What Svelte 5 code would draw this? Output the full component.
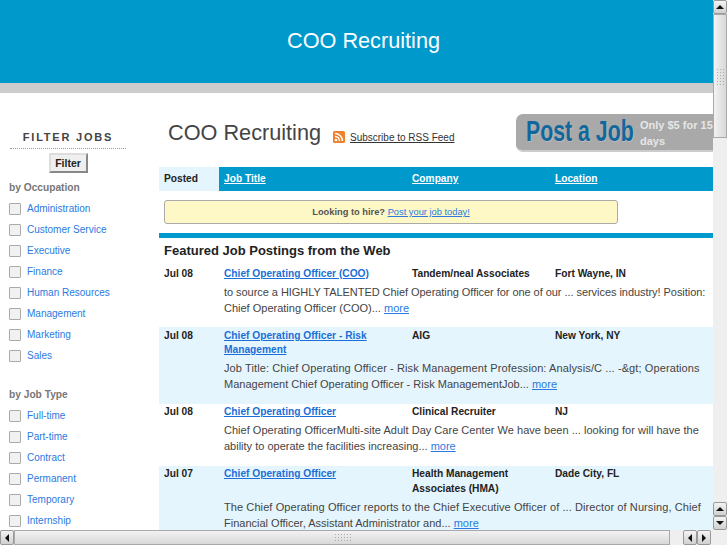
<script>
  const occupations = ['Administration', 'Customer Service', 'Executive', 'Finance', 'Human Resources', 'Management', 'Marketing', 'Sales'];
  const jobTypes = ['Full-time', 'Part-time', 'Contract', 'Permanent', 'Temporary', 'Internship'];
  // track: letter spacing of the description's first line
  const jobs = [
    { date: 'Jul 08', title: 'Chief Operating Officer (COO)', company: 'Tandem/neal Associates', location: 'Fort Wayne, IN', track: -0.05, lead: 'to source a HIGHLY TALENTED Chief Operating Officer for one of our ... services industry! Position:', rest: 'Chief Operating Officer (COO)...' },
    { date: 'Jul 08', title: 'Chief Operating Officer - Risk Management', company: 'AIG', location: 'New York, NY', track: 0.104, lead: 'Job Title: Chief Operating Officer - Risk Management Profession: Analysis/C ... -&gt; Operations', rest: 'Management Chief Operating Officer - Risk ManagementJob...', alt: true },
    { date: 'Jul 08', title: 'Chief Operating Officer', company: 'Clinical Recruiter', location: 'NJ', track: 0.02, lead: 'Chief Operating OfficerMulti-site Adult Day Care Center We have been ... looking for will have the', rest: 'ability to operate the facilities increasing...' },
    { date: 'Jul 07', title: 'Chief Operating Officer', company: 'Health Management Associates (HMA)', location: 'Dade City, FL', track: 0.089, lead: 'The Chief Operating Officer reports to the Chief Executive Officer of ... Director of Nursing, Chief', rest: 'Financial Officer, Assistant Administrator and...', alt: true }
  ];
</script>

<div class="page">
  <header class="top">COO Recruiting</header>
  <div class="stripe"></div>

  <div class="body">
    <aside class="side">
      <h3>FILTER JOBS</h3>
      <div class="btn-wrap"><button>Filter</button></div>
      <h4>by Occupation</h4>
      {#each occupations as o}
        <div class="check"><span class="box"></span><a href="#x">{o}</a></div>
      {/each}
      <h4 class="second">by Job Type</h4>
      {#each jobTypes as o}
        <div class="check"><span class="box"></span><a href="#x">{o}</a></div>
      {/each}
    </aside>

    <main class="main">
      <div class="head">
        <h1>COO Recruiting</h1>
        <svg class="rss" width="12" height="12" viewBox="0 0 12 12">
          <rect width="12" height="12" rx="1.5" fill="#f0812a"/>
          <circle cx="3" cy="9" r="1.3" fill="#fff"/>
          <path d="M2 5.5a4.5 4.5 0 0 1 4.5 4.5M2 2.5a7.5 7.5 0 0 1 7.5 7.5" fill="none" stroke="#fff" stroke-width="1.5"/>
        </svg>
        <a class="sub" href="#x">Subscribe to RSS Feed</a>
        <div class="banner">
          <span class="post"><span>Post a Job</span></span>
          <span class="only">Only $5 for 15 days</span>
        </div>
      </div>

      <div class="row thead">
        <div class="posted">Posted</div>
        <a href="#x">Job Title</a>
        <a href="#x">Company</a>
        <a href="#x">Location</a>
      </div>

      <div class="hire"><b>Looking to hire?</b> <a href="#x">Post your job today!</a></div>

      <h2>Featured Job Postings from the Web</h2>

      {#each jobs as j}
        <div class="job" class:alt={j.alt}>
          <div class="row info">
            <b>{j.date}</b>
            <a href="#x">{j.title}</a>
            <b>{j.company}</b>
            <b>{j.location}</b>
          </div>
          <p><span class="lead" style="letter-spacing: {j.track}px">{j.lead}</span> {j.rest} <a href="#x">more</a></p>
        </div>
      {/each}
    </main>
  </div>

  <div class="vbar">
    <div class="vbtn"><i class="up"></i></div>
    <div class="vthumb"><span class="grip"></span></div>
    <div class="vtrack"></div>
    <div class="vbtn"><i class="up"></i></div>
    <div class="vbtn"><i class="down"></i></div>
  </div>
  <div class="hbar">
    <div class="hbtn"><i class="left"></i></div>
    <div class="hthumb"><span class="grip"></span></div>
    <div class="htrack"></div>
    <div class="hbtn"><i class="left"></i></div>
    <div class="hbtn"><i class="right"></i></div>
    <div class="corner"></div>
  </div>
</div>

<style>
  :global(body) {
    margin: 0;
    background: #fff;
  }
  .page {
    position: relative;
    width: 727px;
    height: 545px;
    overflow: hidden;
    font-family: "Liberation Sans", Arial, sans-serif;
    font-size: 10.2px;
    color: #333;
  }
  .top {
    height: 83px;
    background: #0099cc;
    color: #fff;
    font-size: 21.7px;
    line-height: 82px;
    text-align: center;
  }
  .stripe {
    height: 10px;
    background: #cccccc;
  }
  .body {
    display: flex;
    padding-left: 10px;
  }
  .side {
    width: 116px;
    margin-right: 33px;
    padding-top: 37px;
    flex: none;
  }
  .side h3 {
    margin: 0;
    font-size: 11px;
    line-height: 14px;
    letter-spacing: 1.8px;
    text-align: center;
    color: #444;
    padding-bottom: 4px;
    border-bottom: 1px dotted #999;
  }
  .btn-wrap {
    text-align: center;
    margin-top: 4px;
    height: 20px;
  }
  button {
    font: bold 10.5px "Liberation Sans", Arial, sans-serif;
    color: #222;
    width: 39px;
    height: 20px;
    padding: 0;
    background: #efefef;
    border: 2px solid;
    border-color: #ddd #888 #888 #ddd;
  }
  .side h4 {
    margin: 8px 0 2.5px -1px;
    font-size: 10.2px;
    line-height: 14px;
    color: #777;
  }
  .side h4.second {
    margin-top: 22.5px;
  }
  .check {
    display: flex;
    align-items: center;
    height: 21px;
  }
  .box {
    box-sizing: border-box;
    width: 12px;
    height: 12px;
    flex: none;
    border: 1px solid #aaa;
    border-radius: 1px;
    background: #f1f1f1;
    margin: 0 6px 0 -1px;
    position: relative;
    top: 1px;
  }
  .check a {
    font-size: 10px;
    color: #2a7ae2;
    text-decoration: none;
  }
  .main {
    width: 554px;
    flex: none;
  }
  .head {
    display: flex;
    align-items: center;
    height: 74px;
    padding-left: 9px;
  }
  h1 {
    margin: 6px 12px 0 0;
    font-size: 21.7px;
    font-weight: normal;
    color: #444;
    width: 153px;
    white-space: nowrap;
  }
  .rss {
    margin-right: 5px;
    margin-top: 14px;
  }
  .sub {
    color: #333;
    font-size: 10px;
    margin-top: 14px;
  }
  .banner {
    position: relative;
    margin-left: auto;
    margin-top: 6px;
    width: 197px;
    height: 36px;
    background: #a9a9a9;
    border-radius: 7px 0 0 7px;
    border-bottom: 2px solid #ccc;
    display: flex;
    align-items: center;
  }
  .post {
    width: 116px;
    margin-left: 10px;
    margin-top: -3px;
    flex: none;
    color: #11679c;
    font-weight: bold;
    font-size: 30px;
    white-space: nowrap;
  }
  .post span {
    display: inline-block;
    transform: scaleX(0.71);
    transform-origin: left center;
    text-shadow: 1px 1px 0 #bbb;
  }
  .only {
    width: 80px;
    margin-left: -2px;
    margin-top: 2px;
    color: #e6e6e6;
    font-weight: bold;
    font-size: 11px;
    line-height: 16px;
  }
  .row {
    display: grid;
    grid-template-columns: 60px 193px 143px 1fr;
  }
  .thead {
    height: 24px;
    background: #0099cc;
    line-height: 23px;
    font-weight: bold;
  }
  .thead .posted {
    background: #e5f5fd;
    color: #222;
    padding-left: 5px;
  }
  .thead a {
    color: #fff;
    padding-left: 5px;
  }
  .thead a + a {
    padding-left: 0;
  }
  .hire {
    box-sizing: border-box;
    margin: 9px 0 0 5px;
    width: 454px;
    height: 24px;
    line-height: 22px;
    text-align: center;
    font-size: 9.3px;
    background: #fdf8c6;
    border: 1px solid #aaa;
    border-radius: 3px;
  }
  .hire b {
    color: #555;
  }
  .hire a {
    color: #2a7ae2;
  }
  h2 {
    box-sizing: border-box;
    margin: 9px 0 0;
    padding: 3px 5px 0;
    height: 32px;
    border-top: 5px solid #0099cc;
    font-size: 13px;
    line-height: 19px;
    color: #222;
  }
  .job {
    padding: 1.5px 5px 0;
  }
  .job.alt {
    background: #e5f5fd;
  }
  .info {
    grid-template-columns: 60px 188px 143px 1fr;
    line-height: 14.5px;
  }
  .info b {
    color: #222;
  }
  .info a {
    color: #1a6fd8;
    font-weight: bold;
    padding-right: 24px;
  }
  .job p {
    margin: 2.5px 0 0 60px;
    font-size: 11px;
    line-height: 16px;
    color: #444;
    padding-bottom: 11.5px;
  }
  .lead {
    display: block;
    white-space: nowrap;
  }
  .job p a {
    color: #2a7ae2;
  }
  .vbar {
    position: absolute;
    right: 0;
    top: 0;
    width: 14px;
    bottom: 15px;
    display: flex;
    flex-direction: column;
    background: #efefef;
  }
  .hbar {
    position: absolute;
    left: 0;
    right: 0;
    bottom: 0;
    height: 15px;
    display: flex;
    background: #efefef;
  }
  .vbtn, .hbtn {
    box-sizing: border-box;
    flex: none;
    width: 14px;
    height: 14px;
    background: linear-gradient(#f4f4f4, #d0d0d0);
    border: 1px solid #999;
    border-radius: 2px;
    display: flex;
    align-items: center;
    justify-content: center;
  }
  .hbtn {
    height: 15px;
  }
  .vthumb {
    box-sizing: border-box;
    height: 124px;
    flex: none;
    background: linear-gradient(90deg, #f2f2f2, #d8d8d8);
    border: 1px solid #aaa;
    display: flex;
    align-items: center;
    justify-content: center;
  }
  .hthumb {
    box-sizing: border-box;
    width: 656px;
    flex: none;
    background: linear-gradient(#f2f2f2, #d8d8d8);
    border: 1px solid #aaa;
    display: flex;
    align-items: center;
    justify-content: center;
  }
  .vtrack, .htrack {
    flex: 1;
  }
  .corner {
    width: 16px;
    flex: none;
  }
  .grip {
    width: 17px;
    height: 9px;
    background-image: radial-gradient(#aaa 0.7px, transparent 0.9px);
    background-size: 3px 3px;
  }
  .vthumb .grip {
    width: 9px;
    height: 17px;
  }
  i {
    width: 0;
    height: 0;
    border: 4px solid transparent;
  }
  i.up { border-top: 0; border-bottom-color: #111; }
  i.down { border-bottom: 0; border-top-color: #111; }
  i.left { border-left: 0; border-right-color: #111; }
  i.right { border-right: 0; border-left-color: #111; }
</style>
